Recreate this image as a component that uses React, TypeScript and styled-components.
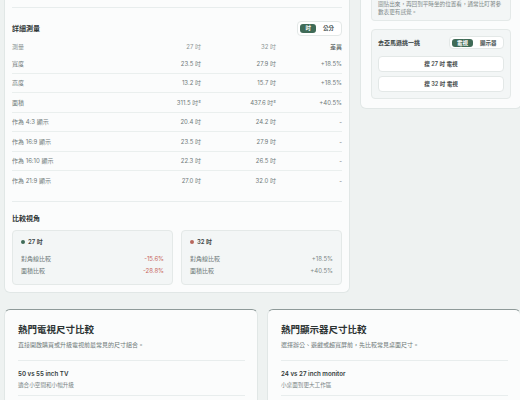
import React from 'react';
import styled, { createGlobalStyle } from 'styled-components';

const GlobalStyle = createGlobalStyle`
  html, body {
    margin: 0;
    padding: 0;
    background: #eef2f1;
    overflow: hidden;
  }
  body {
    font-family: Inter, "Noto Sans CJK TC", "Noto Sans", sans-serif;
    color: #2f3636;
  }
`;

const Page = styled.div`
  width: 530px;
  padding-left: 4px;
  box-sizing: border-box;
`;

const TopGrid = styled.div`
  display: grid;
  grid-template-columns: 346px 162px;
  gap: 10px;
  align-items: start;
`;

const BottomGrid = styled.div`
  display: grid;
  grid-template-columns: 254px 254px;
  gap: 9px;
  margin-top: 16px;
`;

const Card = styled.div<{ $cut?: boolean; $strongTop?: boolean }>`
  background: #fbfcfc;
  border: 1px solid #e1e7e6;
  border-top: ${(p) => (p.$cut ? 'none' : p.$strongTop ? '1.5px solid #8e9a99' : '1px solid #e1e7e6')};
  border-radius: ${(p) => (p.$cut ? '0 0 6px 6px' : '6px')};
  box-sizing: border-box;
`;

const MainCard = styled(Card)`
  padding: 7px 7px 7px 7px;
`;

const Divider = styled.div<{ $gap?: number }>`
  height: 1px;
  background: #e8eded;
  margin-top: ${(p) => p.$gap ?? 0}px;
`;

const SectionHead = styled.div<{ $gap?: number; $h?: number }>`
  display: flex;
  align-items: center;
  justify-content: space-between;
  margin-top: ${(p) => p.$gap ?? 12}px;
  height: ${(p) => p.$h ?? 16}px;
`;

const SectionTitle = styled.div`
  font-size: 7px;
  font-weight: 600;
  color: #2f3636;
`;

const Toggle = styled.div<{ $small?: boolean }>`
  display: flex;
  align-items: center;
  gap: 2px;
  padding: ${(p) => (p.$small ? 1.5 : 2)}px;
  border: 1px solid #e3e8e7;
  border-radius: 4px;
  background: #fff;
  height: ${(p) => (p.$small ? 13 : 15)}px;
  box-sizing: border-box;
`;

const ToggleItem = styled.div<{ $active?: boolean }>`
  height: 100%;
  display: flex;
  align-items: center;
  padding: 0 5px;
  border-radius: 3px;
  font-size: 5.5px;
  font-weight: 600;
  color: ${(p) => (p.$active ? '#ffffff' : '#4b5555')};
  background: ${(p) => (p.$active ? '#3f6b57' : 'transparent')};
`;

const Table = styled.div`
  margin-top: 4px;
`;

const Row = styled.div<{ $head?: boolean; $line?: boolean }>`
  display: grid;
  grid-template-columns: 1fr 82px 75px 66px;
  align-items: center;
  height: ${(p) => (p.$head ? 14 : 19.5)}px;
  border-bottom: ${(p) => (p.$line ? '1px solid #eaefee' : '1px solid transparent')};
  box-sizing: border-box;
  font-size: 6px;
  color: ${(p) => (p.$head ? '#8b9494' : '#6f7a7a')};
`;

const Cell = styled.div<{ $right?: boolean; $dark?: boolean }>`
  text-align: ${(p) => (p.$right ? 'right' : 'left')};
  color: ${(p) => (p.$dark ? '#4a5454' : 'inherit')};
  white-space: nowrap;
`;

const CompareGrid = styled.div`
  display: grid;
  grid-template-columns: 1fr 1fr;
  gap: 8px;
  margin-top: 5px;
`;

const CompareBox = styled.div`
  background: #f3f6f6;
  border: 1px solid #e4e9e8;
  border-radius: 4px;
  padding: 6px 8px;
  box-sizing: border-box;
  height: 55px;
`;

const CompareTitle = styled.div`
  display: flex;
  align-items: center;
  gap: 3px;
  height: 10px;
  font-size: 6px;
  font-weight: 600;
  color: #3d4646;
`;

const Dot = styled.span<{ $color: string }>`
  width: 4px;
  height: 4px;
  border-radius: 50%;
  background: ${(p) => p.$color};
`;

const CompareList = styled.div`
  margin-top: 6px;
`;

const CompareRow = styled.div`
  display: flex;
  justify-content: space-between;
  align-items: center;
  height: 12px;
  font-size: 6px;
  color: #6c7676;
`;

const Delta = styled.span<{ $neg?: boolean }>`
  color: ${(p) => (p.$neg ? '#c8675f' : '#7c8686')};
`;

const SideCard = styled(Card)`
  padding: 0 10px 9px;
`;

const InfoBox = styled.div`
  background: #f3f6f6;
  border: 1px solid #e4e9e8;
  border-top: none;
  border-radius: 0 0 4px 4px;
  padding: 0 6px 4px;
  font-size: 5.6px;
  line-height: 8px;
  color: #7f8989;
`;

const ShopBox = styled.div`
  margin-top: 8px;
  background: #f3f6f6;
  border: 1px solid #e4e9e8;
  border-radius: 4px;
  padding: 6px 6px 6px;
  display: flex;
  flex-direction: column;
  gap: 4px;
`;

const ShopHead = styled.div`
  display: flex;
  align-items: center;
  justify-content: space-between;
  height: 13px;
  margin-bottom: 3px;
`;

const ShopTitle = styled.div`
  font-size: 6px;
  font-weight: 600;
  color: #3a4343;
`;

const ShopButton = styled.div`
  height: 16px;
  display: flex;
  align-items: center;
  justify-content: center;
  background: #ffffff;
  border: 1px solid #e3e8e7;
  border-radius: 4px;
  box-sizing: border-box;
  font-size: 5.6px;
  font-weight: 600;
  color: #3f4848;
`;

const PopularCard = styled(Card)`
  padding: 13px 12px 0 13px;
  height: 110px;
`;

const PopularTitle = styled.div`
  font-size: 9.5px;
  line-height: 14px;
  font-weight: 600;
  color: #2c3333;
`;

const PopularDesc = styled.div`
  margin-top: 3px;
  font-size: 6px;
  line-height: 10px;
  color: #6e7878;
`;

const PopularItem = styled.div`
  border-top: 1px solid #e8eded;
  border-bottom: 1px solid #e8eded;
  margin-top: 10px;
  padding: 7px 0 5px;
`;

const ItemTitle = styled.div`
  font-size: 6.2px;
  line-height: 12px;
  font-weight: 600;
  color: #333b3b;
`;

const ItemSub = styled.div`
  font-size: 5.6px;
  line-height: 10px;
  color: #7a8484;
`;

const rows = [
  ['寬度', '23.5 吋', '27.9 吋', '+18.5%'],
  ['高度', '13.2 吋', '15.7 吋', '+18.5%'],
  ['面積', '311.5 吋²', '437.6 吋²', '+40.5%'],
  ['作為 4:3 顯示', '20.4 吋', '24.2 吋', '-'],
  ['作為 16:9 顯示', '23.5 吋', '27.9 吋', '-'],
  ['作為 16:10 顯示', '22.3 吋', '26.5 吋', '-'],
  ['作為 21:9 顯示', '27.0 吋', '32.0 吋', '-'],
];

const compare = [
  { label: '27 吋', color: '#3f6b57', diag: '-15.6%', area: '-28.8%', neg: true },
  { label: '32 吋', color: '#b8675d', diag: '+18.5%', area: '+40.5%', neg: false },
];

const popular = [
  {
    title: '熱門電視尺寸比較',
    desc: '直接開啟購買或升級電視前最常見的尺寸組合。',
    item: '50 vs 55 inch TV',
    sub: '適合小空間和小幅升級',
  },
  {
    title: '熱門顯示器尺寸比較',
    desc: '選擇辦公、遊戲或超寬屏前，先比較常見桌面尺寸。',
    item: '24 vs 27 inch monitor',
    sub: '小桌面到更大工作區',
  },
];

export default function App() {
  return (
    <>
      <GlobalStyle />
      <Page>
        <TopGrid>
          <MainCard $cut>
            <Divider />
            <SectionHead>
              <SectionTitle>詳細測量</SectionTitle>
              <Toggle>
                <ToggleItem $active>吋</ToggleItem>
                <ToggleItem>公分</ToggleItem>
              </Toggle>
            </SectionHead>
            <Table>
              <Row $head>
                <Cell>測量</Cell>
                <Cell $right>27 吋</Cell>
                <Cell $right>32 吋</Cell>
                <Cell $right $dark>差異</Cell>
              </Row>
              {rows.map((r, i) => (
                <Row key={r[0]} $line={i < rows.length - 1}>
                  <Cell>{r[0]}</Cell>
                  <Cell $right>{r[1]}</Cell>
                  <Cell $right>{r[2]}</Cell>
                  <Cell $right>{r[3]}</Cell>
                </Row>
              ))}
            </Table>
            <Divider $gap={10} />
            <SectionHead $gap={9} $h={14}>
              <SectionTitle>比較視角</SectionTitle>
            </SectionHead>
            <CompareGrid>
              {compare.map((c) => (
                <CompareBox key={c.label}>
                  <CompareTitle>
                    <Dot $color={c.color} />
                    {c.label}
                  </CompareTitle>
                  <CompareList>
                    <CompareRow>
                      <span>對角線比較</span>
                      <Delta $neg={c.neg}>{c.diag}</Delta>
                    </CompareRow>
                    <CompareRow>
                      <span>面積比較</span>
                      <Delta $neg={c.neg}>{c.area}</Delta>
                    </CompareRow>
                  </CompareList>
                </CompareBox>
              ))}
            </CompareGrid>
          </MainCard>

          <SideCard $cut>
            <InfoBox>
              圖貼出來，再回到平時坐的位置看，通常比盯著參數表更有感覺。
            </InfoBox>
            <ShopBox>
              <ShopHead>
                <ShopTitle>去亞馬遜挑一挑</ShopTitle>
                <Toggle $small>
                  <ToggleItem $active>電視</ToggleItem>
                  <ToggleItem>顯示器</ToggleItem>
                </Toggle>
              </ShopHead>
              <ShopButton>搜 27 吋 電視</ShopButton>
              <ShopButton>搜 32 吋 電視</ShopButton>
            </ShopBox>
          </SideCard>
        </TopGrid>

        <BottomGrid>
          {popular.map((p) => (
            <PopularCard key={p.title} $strongTop>
              <PopularTitle>{p.title}</PopularTitle>
              <PopularDesc>{p.desc}</PopularDesc>
              <PopularItem>
                <ItemTitle>{p.item}</ItemTitle>
                <ItemSub>{p.sub}</ItemSub>
              </PopularItem>
            </PopularCard>
          ))}
        </BottomGrid>
      </Page>
    </>
  );
}
